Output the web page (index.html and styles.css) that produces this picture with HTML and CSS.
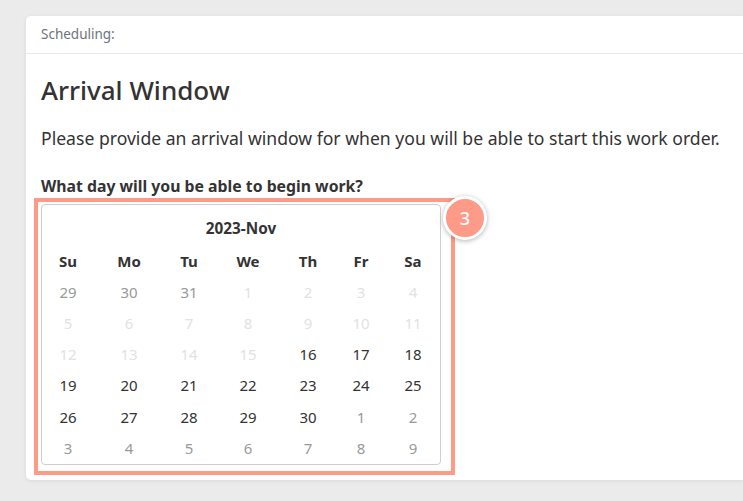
FILE: index.html
```html
<!DOCTYPE html>
<html>
<head>
<meta charset="utf-8">
<link rel="stylesheet" href="styles.css">
</head>
<body>
<div class="card">
  <div class="card-header">Scheduling:</div>
  <div class="card-body">
    <h2 class="title">Arrival Window</h2>
    <p class="lead">Please provide an arrival window for when you will be able to start this work order.</p>
    <div class="label">What day will you be able to begin work?</div>
    <div class="cal-wrap">
      <div class="calendar">
        <div class="cal-title">2023-Nov</div>
        <div class="grid">
          <div class="hd">Su</div><div class="hd">Mo</div><div class="hd">Tu</div><div class="hd">We</div><div class="hd">Th</div><div class="hd">Fr</div><div class="hd">Sa</div>
          <div class="d other">29</div><div class="d other">30</div><div class="d other">31</div><div class="d dis">1</div><div class="d dis">2</div><div class="d dis">3</div><div class="d dis">4</div>
          <div class="d dis">5</div><div class="d dis">6</div><div class="d dis">7</div><div class="d dis">8</div><div class="d dis">9</div><div class="d dis">10</div><div class="d dis">11</div>
          <div class="d dis">12</div><div class="d dis">13</div><div class="d dis">14</div><div class="d dis">15</div><div class="d">16</div><div class="d">17</div><div class="d">18</div>
          <div class="d">19</div><div class="d">20</div><div class="d">21</div><div class="d">22</div><div class="d">23</div><div class="d">24</div><div class="d">25</div>
          <div class="d">26</div><div class="d">27</div><div class="d">28</div><div class="d">29</div><div class="d">30</div><div class="d other">1</div><div class="d other">2</div>
          <div class="d other">3</div><div class="d other">4</div><div class="d other">5</div><div class="d other">6</div><div class="d other">7</div><div class="d other">8</div><div class="d other">9</div>
        </div>
      </div>
      <div class="highlight"></div>
      <div class="badge">3</div>
    </div>
  </div>
</div>
</body>
</html>
```
FILE: styles.css
```css
html, body {
  margin: 0;
  padding: 0;
  overflow: hidden;
}
body {
  background: #ebebeb;
  width: 743px;
  height: 501px;
  padding: 16px 0 0 26px;
  box-sizing: border-box;
  font-family: "Noto Sans", "Open Sans", sans-serif;
  color: #333;
}
.card {
  background: #fff;
  width: 717px;
  height: 464px;
  border-radius: 5px 0 0 5px;
  box-shadow: 0 1px 4px rgba(0,0,0,0.08);
}
.card-header {
  height: 37px;
  line-height: 37px;
  padding-left: 15px;
  font-size: 13.5px;
  color: #6c757d;
  border-bottom: 1px solid #e8e8e8;
}
.card-body {
  padding: 0 15px;
}
.title {
  margin: 0;
  padding-top: 19px;
  font-size: 26px;
  font-weight: 500;
  line-height: 34px;
  color: #333;
}
.lead {
  margin: 19px 0 0;
  font-size: 17.6px;
  line-height: 24px;
  white-space: nowrap;
}
.label {
  margin-top: 25px;
  font-size: 15.8px;
  font-weight: 700;
  line-height: 22px;
}
.cal-wrap {
  position: relative;
  margin-top: 7px;
  width: 400px;
}
.calendar {
  border: 1px solid #cfcfcf;
  border-radius: 4px;
  height: 259px;
}
.cal-title {
  text-align: center;
  font-weight: 700;
  font-size: 15.3px;
  line-height: 20px;
  padding: 13px 0 7px;
}
.grid {
  display: grid;
  grid-template-columns: 52px 70px 50px 68px 52px 54px 50px;
  grid-auto-rows: 31.2px;
}
.grid > div {
  display: flex;
  align-items: center;
  justify-content: center;
  font-size: 15px;
}
.hd {
  font-weight: 700;
}
.d { color: #333; }
.d.other { color: #999; }
.d.dis { color: #e2e2e2; }
.highlight {
  position: absolute;
  left: -7px;
  top: -6px;
  width: 421px;
  height: 277px;
  box-sizing: border-box;
  border: 4px solid #fd9a88;
  pointer-events: none;
}
.badge {
  position: absolute;
  left: 402px;
  top: -8px;
  width: 38px;
  height: 38px;
  border-radius: 50%;
  background: #fd9a88;
  border: 3px solid #fff;
  box-shadow: 0 1px 5px rgba(0,0,0,0.3);
  color: #fff;
  font-size: 18px;
  font-weight: 500;
  display: flex;
  align-items: center;
  justify-content: center;
}
```
